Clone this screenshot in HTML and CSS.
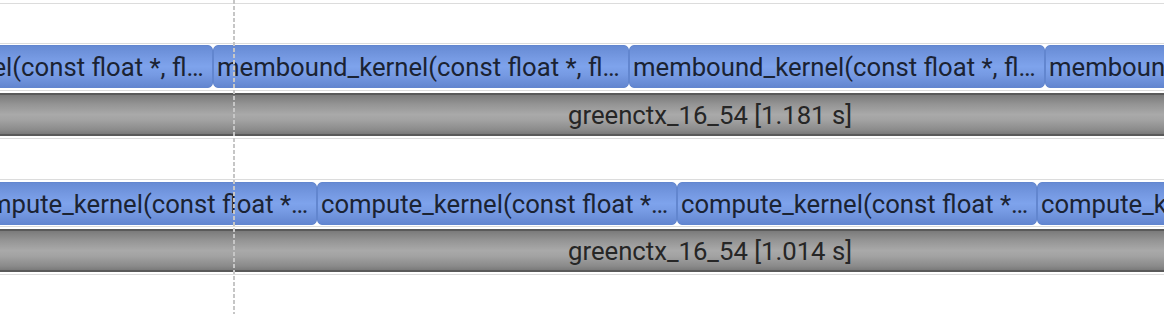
FILE: index.html
```html
<!DOCTYPE html>
<html>
<head>
<meta charset="utf-8">
<link rel="stylesheet" href="styles.css">
</head>
<body>
<div class="timeline">
  <div class="track track-empty first"></div>
  <div class="track track-kernel">
    <div class="slice" style="left:-203px;width:416px"><span class="label">membound_kernel(const float *, fl…</span></div>
    <div class="slice" style="left:213px;width:416px"><span class="label">membound_kernel(const float *, fl…</span></div>
    <div class="slice" style="left:629px;width:416px"><span class="label">membound_kernel(const float *, fl…</span></div>
    <div class="slice" style="left:1045px;width:416px"><span class="label">membound_kernel(const float *, fl…</span></div>
  </div>
  <div class="track track-ctx">
    <div class="ctx" style="left:-300px;width:2020px"><span class="ctx-label">greenctx_16_54 [1.181 s]</span></div>
  </div>
  <div class="track track-empty"></div>
  <div class="track track-kernel">
    <div class="slice" style="left:-43px;width:360px"><span class="label">compute_kernel(const float *…</span></div>
    <div class="slice" style="left:317px;width:360px"><span class="label">compute_kernel(const float *…</span></div>
    <div class="slice" style="left:677px;width:360px"><span class="label">compute_kernel(const float *…</span></div>
    <div class="slice" style="left:1037px;width:360px"><span class="label">compute_kernel(const float *…</span></div>
  </div>
  <div class="track track-ctx">
    <div class="ctx" style="left:-300px;width:2020px"><span class="ctx-label">greenctx_16_54 [1.014 s]</span></div>
  </div>
  <div class="track track-empty last"></div>
  <div class="cursor"></div>
</div>
</body>
</html>
```

FILE: styles.css
```css
html, body {
  margin: 0;
  padding: 0;
  background: #ffffff;
}

body {
  width: 1164px;
  height: 314px;
  overflow: hidden;
  font-family: Roboto, "Liberation Sans", sans-serif;
}

.timeline {
  position: relative;
  padding-top: 3px;
  height: 311px;
  overflow: hidden;
}

.track {
  position: relative;
  border-top: 1px solid #dcdcdc;
}

.track-empty {
  height: 40px;
}

.track-empty.first {
  height: 39px;
}

.track-kernel {
  height: 46px;
}

.track-ctx {
  height: 47px;
}

.slice {
  position: absolute;
  top: 1px;
  height: 43px;
  box-sizing: border-box;
  border: 1px solid #6286cf;
  border-radius: 5px;
  background: linear-gradient(to bottom, #678bd4 0%, #769ae3 30%, #7ea3ec 50%, #769ae3 70%, #6386d0 100%);
  display: flex;
  align-items: center;
  padding-left: 3px;
  overflow: hidden;
  white-space: nowrap;
}

.track-kernel + .track-ctx + .track-empty + .track-kernel .slice {
  top: 2px;
}

.label {
  font-size: 25.7px;
  color: #1b2333;
}

.ctx {
  position: absolute;
  top: 2px;
  height: 43px;
  box-sizing: border-box;
  border-top: 2px solid #5a5a5a;
  border-bottom: 2px solid #5a5a5a;
  background: linear-gradient(to bottom, #7b7b7b 0%, #959595 25%, #a9a9a9 50%, #a2a2a2 65%, #8a8a8a 90%, #7a7a7a 100%);
  display: flex;
  align-items: center;
  justify-content: center;
  white-space: nowrap;
}

.ctx-label {
  font-size: 25.7px;
  color: #262626;
}

.cursor {
  position: absolute;
  top: 0;
  left: 233px;
  width: 2px;
  height: 314px;
  background: repeating-linear-gradient(to bottom, #c6c6c6 0px, #c6c6c6 4px, transparent 4px, transparent 6px);
  pointer-events: none;
}
```
